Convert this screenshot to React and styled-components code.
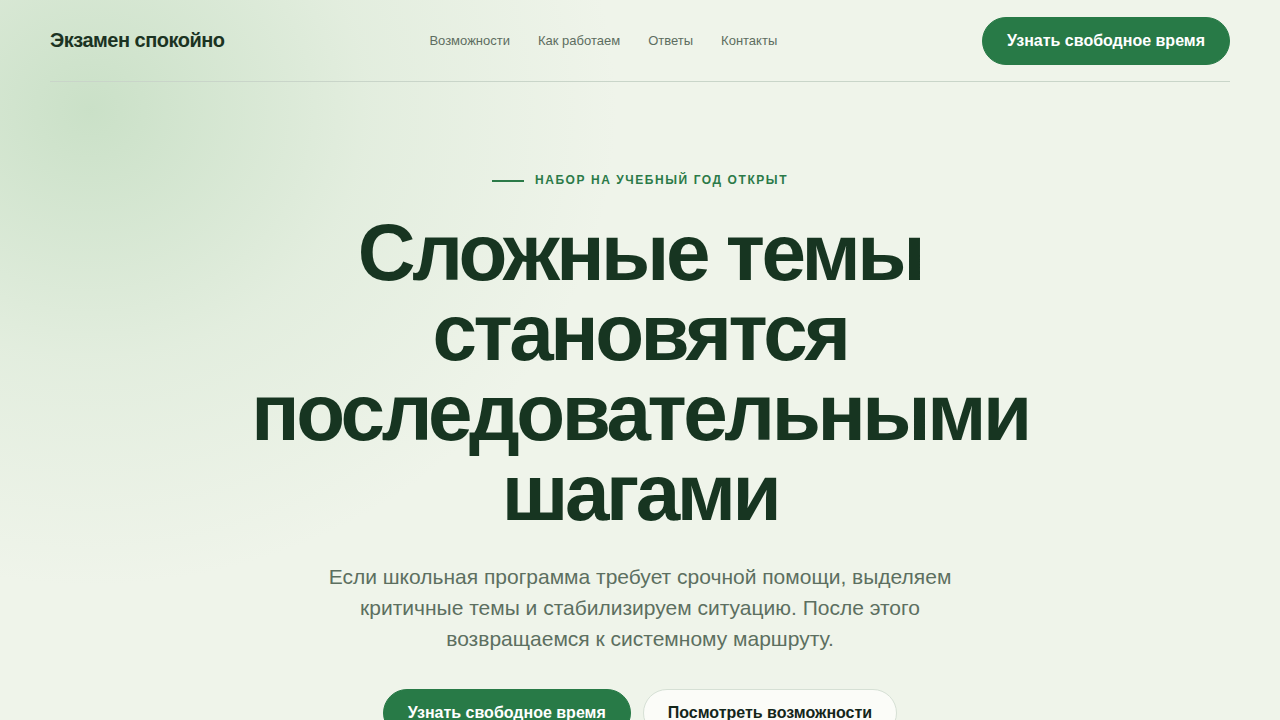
import React from 'react';
import styled, { createGlobalStyle } from 'styled-components';

const GlobalStyle = createGlobalStyle`
  html, body {
    margin: 0;
    padding: 0;
  }
  body {
    font-family: "Liberation Sans", Arial, sans-serif;
    background: #eff4eb;
    overflow: hidden;
  }
`;

const Page = styled.div`
  min-height: 720px;
  background:
    radial-gradient(ellipse 620px 560px at 90px 110px, rgba(190, 218, 188, 0.75), rgba(190, 218, 188, 0.25) 45%, rgba(190, 218, 188, 0) 85%),
    #eff4ea;
`;

const Header = styled.header`
  margin: 0 50px;
  height: 81px;
  display: flex;
  align-items: center;
  justify-content: space-between;
  border-bottom: 1px solid #c9d5c9;
`;

const Logo = styled.div`
  font-size: 20px;
  font-weight: 700;
  color: #1b3322;
  letter-spacing: -0.025em;
`;

const Nav = styled.nav`
  display: flex;
  gap: 28px;
`;

const NavLink = styled.a`
  font-size: 13px;
  color: #5d6d60;
  text-decoration: none;
`;

const Button = styled.a`
  display: inline-flex;
  align-items: center;
  justify-content: center;
  height: 48px;
  padding: 0 24px;
  border-radius: 24px;
  font-size: 16px;
  font-weight: 700;
  text-decoration: none;
  box-sizing: border-box;
  background: ${({ $variant }) => ($variant === 'light' ? '#fbfcf8' : '#287a47')};
  color: ${({ $variant }) => ($variant === 'light' ? '#14261a' : '#ffffff')};
  border: 1px solid ${({ $variant }) => ($variant === 'light' ? '#d6e0d5' : '#287a47')};
`;

const Hero = styled.section`
  display: flex;
  flex-direction: column;
  align-items: center;
  padding-top: 90px;
  text-align: center;
`;

const Eyebrow = styled.div`
  display: flex;
  align-items: center;
  gap: 11px;
  font-size: 12px;
  line-height: 17px;
  font-weight: 700;
  letter-spacing: 0.13em;
  text-transform: uppercase;
  color: #2b7a48;

  &::before {
    content: '';
    width: 32px;
    height: 2px;
    background: #2b7a48;
  }
`;

const Title = styled.h1`
  margin: 24px 0 0;
  max-width: 880px;
  font-size: 80px;
  line-height: 80px;
  font-weight: 700;
  letter-spacing: -0.043em;
  color: #173521;
`;

const Lead = styled.p`
  margin: 28px 0 0;
  max-width: 660px;
  font-size: 21px;
  line-height: 31px;
  color: #5c6f60;
`;

const Actions = styled.div`
  display: flex;
  gap: 12px;
  margin-top: 35px;
`;

export default function App() {
  return (
    <>
      <GlobalStyle />
      <Page>
        <Header>
          <Logo>Экзамен спокойно</Logo>
          <Nav>
            <NavLink href="#">Возможности</NavLink>
            <NavLink href="#">Как работаем</NavLink>
            <NavLink href="#">Ответы</NavLink>
            <NavLink href="#">Контакты</NavLink>
          </Nav>
          <Button href="#">Узнать свободное время</Button>
        </Header>
        <Hero>
          <Eyebrow>Набор на учебный год открыт</Eyebrow>
          <Title>Сложные темы становятся последовательными шагами</Title>
          <Lead>
            Если школьная программа требует срочной помощи, выделяем критичные темы и стабилизируем
            ситуацию. После этого возвращаемся к системному маршруту.
          </Lead>
          <Actions>
            <Button href="#">Узнать свободное время</Button>
            <Button href="#" $variant="light">Посмотреть возможности</Button>
          </Actions>
        </Hero>
      </Page>
    </>
  );
}
